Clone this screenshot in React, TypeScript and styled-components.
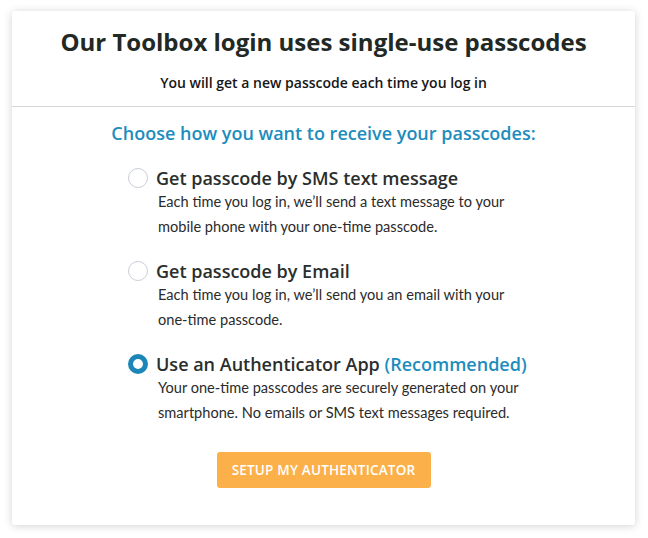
import React, { useState } from 'react'
import styled, { createGlobalStyle } from 'styled-components'

type Choice = 'sms' | 'email' | 'app'

type OptionData = {
  id: Choice
  title: string
  note?: string
  lines: string[]
}

const options: OptionData[] = [
  {
    id: 'sms',
    title: 'Get passcode by SMS text message',
    lines: ['Each time you log in, we\u2019ll send a text message to your', 'mobile phone with your one-time passcode.'],
  },
  {
    id: 'email',
    title: 'Get passcode by Email',
    lines: ['Each time you log in, we\u2019ll send you an email with your', 'one-time passcode.'],
  },
  {
    id: 'app',
    title: 'Use an Authenticator App',
    note: '(Recommended)',
    lines: ['Your one-time passcodes are securely generated on your', 'smartphone. No emails or SMS text messages required.'],
  },
]

const GlobalStyle = createGlobalStyle`
  html, body {
    margin: 0;
    padding: 0;
    background: #ffffff;
  }
  body {
    font-family: 'Open Sans', 'Liberation Sans', sans-serif;
    color: #222;
  }
`

const Page = styled.div`
  padding: 11px 13px 13px 12px;
`

const Card = styled.div`
  background: #fff;
  border-radius: 3px;
  box-shadow: 0 1px 8px rgba(0, 0, 0, 0.18);
  height: 514px;
  box-sizing: border-box;
`

const Header = styled.div`
  text-align: center;
  padding: 15px 0 13px;
  border-bottom: 1px solid #d6d6d6;
`

const Title = styled.h1`
  margin: 0;
  font-size: 24px;
  font-weight: 700;
  color: #222824;
  line-height: 32px;
`

const Subtitle = styled.p`
  margin: 15px 0 0;
  font-size: 14px;
  font-weight: 600;
  color: #161616;
  line-height: 20px;
`

const Body = styled.div`
  padding: 13px 0 0;
  display: flex;
  flex-direction: column;
  align-items: center;
`

const Prompt = styled.h2`
  margin: 0;
  font-size: 18px;
  font-weight: 600;
  color: #1d8dbd;
  line-height: 26px;
`

const List = styled.div`
  align-self: flex-start;
  margin: 21px 0 0 115px;
  display: flex;
  flex-direction: column;
  gap: 21px;
`

const Option = styled.label`
  display: grid;
  grid-template-columns: 29px 1fr;
  cursor: pointer;
`

const Radio = styled.span<{ $on: boolean }>`
  width: 20px;
  height: 20px;
  box-sizing: border-box;
  border-radius: 50%;
  margin-top: 1px;
  margin-left: 1px;
  border: ${(p) => (p.$on ? '5px solid #1b87b8' : '1px solid #c9ced6')};
  background: #fff;
`

const OptionTitle = styled.div`
  font-size: 18px;
  font-weight: 600;
  color: #2a2e2c;
  line-height: 22px;
`

const Note = styled.span`
  color: #1d8dbd;
`

const Desc = styled.div`
  grid-column: 2;
  margin-left: 2px;
  font-family: Lato, 'Liberation Sans', sans-serif;
  font-size: 14.6px;
  color: #2b2b2b;
  line-height: 25px;
`

const Action = styled.button`
  margin-top: 27px;
  width: 214px;
  height: 36px;
  border: none;
  border-radius: 3px;
  background: #fcb04a;
  color: #fff;
  font-family: 'Open Sans', 'Liberation Sans', sans-serif;
  font-size: 13.5px;
  font-weight: 600;
  letter-spacing: 0.2px;
  cursor: pointer;
`

export default function App() {
  const [choice, setChoice] = useState<Choice>('app')
  return (
    <>
      <GlobalStyle />
      <Page>
        <Card>
          <Header>
            <Title>Our Toolbox login uses single-use passcodes</Title>
            <Subtitle>You will get a new passcode each time you log in</Subtitle>
          </Header>
          <Body>
            <Prompt>Choose how you want to receive your passcodes:</Prompt>
            <List>
              {options.map((o) => (
                <Option key={o.id} onClick={() => setChoice(o.id)}>
                  <Radio $on={choice === o.id} />
                  <OptionTitle>
                    {o.title}
                    {o.note && <Note> {o.note}</Note>}
                  </OptionTitle>
                  <Desc>
                    {o.lines.map((l) => (
                      <div key={l}>{l}</div>
                    ))}
                  </Desc>
                </Option>
              ))}
            </List>
            <Action>SETUP MY AUTHENTICATOR</Action>
          </Body>
        </Card>
      </Page>
    </>
  )
}
